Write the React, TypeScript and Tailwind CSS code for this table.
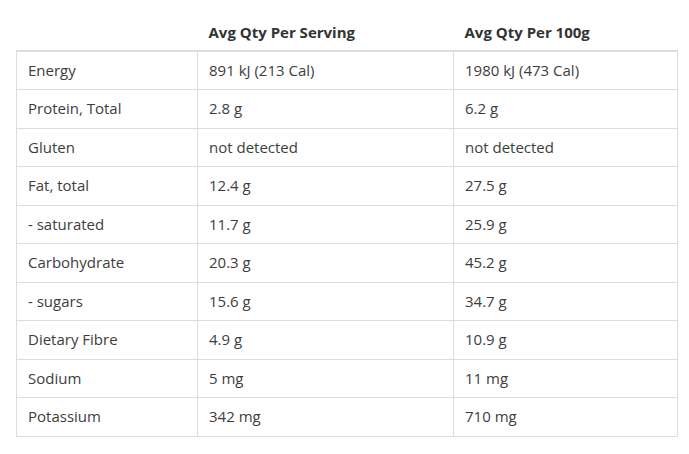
import React from 'react';

const rows = [
  ['Energy', '891 kJ (213 Cal)', '1980 kJ (473 Cal)'],
  ['Protein, Total', '2.8 g', '6.2 g'],
  ['Gluten', 'not detected', 'not detected'],
  ['Fat, total', '12.4 g', '27.5 g'],
  ['- saturated', '11.7 g', '25.9 g'],
  ['Carbohydrate', '20.3 g', '45.2 g'],
  ['- sugars', '15.6 g', '34.7 g'],
  ['Dietary Fibre', '4.9 g', '10.9 g'],
  ['Sodium', '5 mg', '11 mg'],
  ['Potassium', '342 mg', '710 mg'],
];

export default function App() {
  return (
    <div className="bg-white min-h-[454px] px-4 pt-[20px] font-['Open_Sans',sans-serif] text-[#3d3d3d] text-[15px]">
      <table className="w-[661px] border-collapse table-fixed">
        <colgroup>
          <col className="w-[181px]" />
          <col className="w-[256px]" />
          <col className="w-[224px]" />
        </colgroup>
        <thead>
          <tr>
            <th className="h-[31px] pb-[3px]"></th>
            <th className="text-left font-bold px-[11px] align-top leading-[24px] text-[#333]">Avg Qty Per Serving</th>
            <th className="text-left font-bold px-[11px] align-top leading-[24px] text-[#333]">Avg Qty Per 100g</th>
          </tr>
        </thead>
        <tbody className="border-t-2 border-[#ddd]">
          {rows.map((r) => (
            <tr key={r[0]} className="h-[38.5px]">
              {r.map((c, i) => (
                <td key={i} className="border border-[#ddd] px-[11px] pt-0 pb-[1px] leading-[20px]">
                  {c}
                </td>
              ))}
            </tr>
          ))}
        </tbody>
      </table>
    </div>
  );
}
